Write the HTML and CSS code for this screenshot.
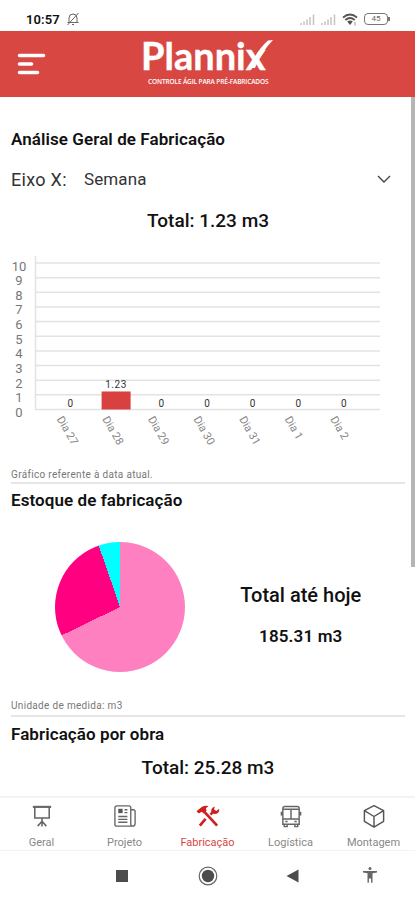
FILE: index.html
```html
<!DOCTYPE html>
<html lang="pt-BR">
<head>
<meta charset="UTF-8">
<meta name="viewport" content="width=device-width, initial-scale=1.0">
<title>Plannix</title>
<link rel="stylesheet" href="styles.css">
</head>
<body>
  <div class="status-bar">
    <span class="time">10:57</span>
    <svg class="mute" width="14" height="14" viewBox="0 0 14 14" fill="none" stroke="#666" stroke-width="1">
      <path d="M3 10.5V6a4 4 0 0 1 8 0v4.500zM1.500 10.500h11M6 12.500h2M12.500 1L1.500 13"/>
    </svg>
    <div class="status-icons">
      <svg width="15" height="12" viewBox="0 0 15 12" stroke="#c4c4c4" stroke-width="1.500">
        <path d="M1 12v-2M4 12V8.500M7 12V6.500M10 12V4M13.500 12V1.500"/>
      </svg>
      <svg width="15" height="12" viewBox="0 0 15 12" stroke="#c4c4c4" stroke-width="1.500">
        <path d="M1 12v-2M4 12V8.500M7 12V6.500M10 12V4M13.500 12V1.500"/>
      </svg>
      <svg class="wifi" width="16" height="13" viewBox="0 0 16 13" fill="none" stroke="#555" stroke-width="1.700">
        <path d="M1 4.500Q8-1.500 15 4.500M3.300 7Q8 3 12.700 7"/>
        <path d="M5.200 8.500Q8 6.500 10.800 8.500L8 12z" fill="#555" stroke="none"/>
        <path d="M13 9v3.500" stroke="#aaa" stroke-width="1.200"/>
      </svg>
      <span class="battery">45</span>
    </div>
  </div>

  <header class="header">
    <svg class="menu" width="29" height="22" viewBox="0 0 29 22" stroke="#fff" stroke-width="3.600" stroke-linecap="round">
      <path d="M2.500 2.500h24M2.500 11h12M2.500 19.500h18"/>
    </svg>
    <div class="logo">
      <div class="logo-name">Plannix
        <svg class="swoosh" width="26" height="31" viewBox="0 0 26 31" fill="#fff">
          <path d="M2 29Q10 11 21 1.500L26 1Q15 12 8 29z"/>
        </svg>
      </div>
      <div class="logo-sub">CONTROLE ÁGIL PARA PRÉ-FABRICADOS</div>
    </div>
  </header>

  <main class="content">
    <section class="section analysis">
      <h2>Análise Geral de Fabricação</h2>
      <div class="axis-select">
        <span class="axis-label">Eixo X:</span>
        <span class="axis-value">Semana</span>
        <svg width="14" height="9" viewBox="0 0 14 9" fill="none" stroke="#444" stroke-width="1.400">
          <path d="M1 1l6 6 6-6"/>
        </svg>
      </div>
      <p class="total total-week">Total: 1.23 m3</p>
      <svg class="bar-chart" width="394" height="206" viewBox="0 0 394 206">
        <g class="grid" id="grid"></g>
        <path class="axis" d="M24.500 5v154"/>
        <g id="bars"></g>
      </svg>
      <p class="note">Gráfico referente à data atual.</p>
    </section>

    <section class="section stock">
      <h2>Estoque de fabricação</h2>
      <div class="stock-row">
        <div class="pie"></div>
        <div class="stock-total">
          <p class="stock-title">Total até hoje</p>
          <p class="stock-value">185.31 m3</p>
        </div>
      </div>
      <p class="note">Unidade de medida: m3</p>
    </section>

    <section class="by-work">
      <h2>Fabricação por obra</h2>
      <p class="total total-work">Total: 25.28 m3</p>
    </section>
    <div class="scrollbar"></div>
  </main>

  <nav class="tabs">
    <a class="tab">
      <svg width="24" height="26" viewBox="0 0 24 26" fill="none" stroke="#666" stroke-width="1.600">
        <path d="M2.500 3h19" stroke-width="2.200"/>
        <path d="M4.500 3v11.500h15V3M12 14.500v9M12 18l-4.500 5M12 18l4.500 5"/>
      </svg>
      <span>Geral</span>
    </a>
    <a class="tab">
      <svg width="24" height="26" viewBox="0 0 24 26" fill="none" stroke="#666" stroke-width="1.400">
        <path d="M18 21V4a2 2 0 0 0-2-2H3.500a2 2 0 0 0-2 2v17a2 2 0 0 0 2 2H20a2.500 2.500 0 0 0 2.500-2.500V8a2 2 0 0 0-2-2H18M18 20a2.500 2.500 0 0 0 2 3"/>
        <path d="M11.500 6h3M11.500 9h3M5 13h9.500M5 16h9.500M5 19h9.500"/>
        <path d="M5 5h4.500v4.500H5z" fill="#555" stroke="none"/>
      </svg>
      <span>Projeto</span>
    </a>
    <a class="tab active">
      <svg width="26" height="26" viewBox="0 0 26 26" fill="none" stroke="#cf1f1f" stroke-width="2.800">
        <path d="M9.500 8.500L22.500 22.500M10.500 15.500L4.500 22.500"/>
        <path d="M15.500 11l3-3" stroke-width="2.500"/>
        <path d="M1 7.500L6.500 3Q9.500 1.200 13.500 2L10.800 4.500L11.500 7L8.500 10L6.500 8L3.500 10z" fill="#cf1f1f" stroke="none"/>
        <path d="M16.500 9Q15.500 4 20 2.500L19.300 5.500L21.500 7.300L24.800 5Q25 10.500 19.500 10.500z" fill="#cf1f1f" stroke="none"/>
      </svg>
      <span>Fabricação</span>
    </a>
    <a class="tab">
      <svg width="24" height="26" viewBox="0 0 24 26" fill="none" stroke="#666" stroke-width="1.500">
        <path d="M3.500 21V4.500a2 2 0 0 1 2-2h13a2 2 0 0 1 2 2V21zM3.500 5.500h17M3.500 15.500h17M12 5.500v10M5 21v2.500h3V21M16 21v2.500h3V21M2 8v4M22 8v4M6 18.200h2.500M15.500 18.200H18"/>
      </svg>
      <span>Logística</span>
    </a>
    <a class="tab">
      <svg width="24" height="26" viewBox="0 0 24 26" fill="none" stroke="#555" stroke-width="1.500" stroke-linejoin="round">
        <path d="M12 1.800l10 5.200v11L12 24L2 18V7zM2 7l10 6 10-6M12 13v11"/>
      </svg>
      <span>Montagem</span>
    </a>
  </nav>

  <div class="system-nav">
    <span></span>
    <svg width="24" height="24" viewBox="0 0 24 24"><path d="M6 6h12v12H6z" fill="#4c4c4c"/></svg>
    <svg width="24" height="24" viewBox="0 0 24 24">
      <circle cx="12" cy="12" r="8.800" fill="none" stroke="#666" stroke-width="1.200"/>
      <circle cx="12" cy="12" r="6.200" fill="#4c4c4c"/>
    </svg>
    <svg width="24" height="24" viewBox="0 0 24 24"><path d="M17.500 5.500v13L5.500 12z" fill="#4c4c4c"/></svg>
    <svg width="24" height="24" viewBox="0 0 24 24" fill="#666">
      <circle cx="12" cy="4.500" r="1.500"/>
      <path d="M5 7h14v1.500l-4.500.8v9.500h-1.400V14.500h-2.200v4.300H9.500V9.300L5 8.500z"/>
    </svg>
  </div>

  <script>
    const days = [
      ["Dia 27", 0], ["Dia 28", 1.23], ["Dia 29", 0], ["Dia 30", 0],
      ["Dia 31", 0], ["Dia 1", 0], ["Dia 2", 0]
    ];
    const base = 158.5;
    const step = 14.65;

    let grid = "";
    for (let i = 0; i <= 10; i++) {
      const y = base - i * step;
      grid += `<path d="M24 ${y}H369"/><text x="8" y="${y + 7.5}">${i}</text>`;
    }
    document.getElementById("grid").innerHTML = grid;

    let bars = "";
    days.forEach(([name, value], i) => {
      const x = 59.5 + i * 45.6;
      const h = value * step;
      if (value > 0) {
        bars += `<rect x="${x - 14.5}" y="${base - h}" width="29" height="${h}"/>`;
      }
      bars += `<text class="value" x="${x}" y="${base - h - 3}">${value}</text>`;
      bars += `<text class="day" transform="translate(${x - 14} 168) rotate(60)">${name}</text>`;
    });
    document.getElementById("bars").innerHTML = bars;
  </script>
</body>
</html>
```
FILE: styles.css
```css
* {
  box-sizing: border-box;
}

body {
  display: flex;
  flex-direction: column;
  height: 900px;
  margin: 0;
  overflow: hidden;
  font-family: Roboto, sans-serif;
  background-color: #fff;
  color: #111;
}

h2,
p {
  margin: 0;
}

svg {
  display: block;
}

.status-bar {
  display: flex;
  align-items: center;
  height: 31px;
  padding: 7px 27px 0 26px;
}

.time {
  font-size: 13px;
  font-weight: 600;
  letter-spacing: 0.1px;
}

.mute {
  margin-left: 6px;
}

.status-icons {
  display: flex;
  align-items: center;
  gap: 6px;
  margin-left: auto;
}

.battery {
  position: relative;
  width: 24px;
  height: 12px;
  border: 1.5px solid #777;
  border-radius: 4px;
  font-size: 8px;
  line-height: 10px;
  text-align: center;
  color: #666;
}

.battery::after {
  content: "";
  position: absolute;
  right: -3px;
  top: 3px;
  width: 2px;
  height: 4px;
  background-color: #777;
}

.header {
  display: flex;
  height: 66px;
  background-color: #d94743;
  color: #fff;
}

.menu {
  margin: 22px 0 0 17px;
}

.logo {
  margin-left: 95px;
  padding-top: 4px;
}

.logo-name {
  position: relative;
  height: 40px;
  font-family: Lato, sans-serif;
  font-size: 38px;
  font-weight: 700;
  line-height: 40px;
  -webkit-text-stroke: 0.4px #fff;
}

.swoosh {
  position: absolute;
  left: 106px;
  top: 4px;
}

.logo-sub {
  margin: 2px 0 0 7px;
  font-family: "Open Sans", sans-serif;
  font-size: 6.5px;
  font-weight: 600;
  line-height: 9px;
  letter-spacing: -0.13px;
  white-space: nowrap;
}

.content {
  position: relative;
  height: 701px;
  padding: 0 10px 0 11px;
  border-bottom: 2px solid #f3f3f3;
  overflow: hidden;
}

.scrollbar {
  position: absolute;
  right: 0;
  top: 0;
  width: 4px;
  height: 470px;
  background-color: #b5b5b5;
}

.section {
  border-bottom: 2px solid #e6e6e6;
}

h2 {
  font-size: 17px;
  font-weight: 600;
  line-height: 20px;
  letter-spacing: 0.08px;
}

.analysis {
  height: 387px;
  padding-top: 32px;
}

.axis-select {
  display: flex;
  align-items: center;
  height: 24px;
  margin-top: 18px;
  padding-right: 14px;
  color: #333;
}

.axis-select svg {
  margin-left: auto;
}

.axis-label {
  width: 73px;
  font-size: 18px;
  letter-spacing: 0.3px;
}

.axis-value {
  font-size: 17px;
  letter-spacing: 0.1px;
}

.total {
  font-size: 19px;
  font-weight: 500;
  line-height: 24px;
  text-align: center;
}

.total-week {
  margin-top: 18px;
}

.bar-chart {
  margin-top: 18px;
}

.grid path,
.axis {
  stroke: #e3e3e3;
  stroke-width: 1.5;
}

.grid text {
  font-size: 13px;
  text-anchor: middle;
  fill: #777;
}

#bars rect {
  fill: #d94040;
}

.value {
  font-size: 10px;
  letter-spacing: 0.6px;
  text-anchor: middle;
  fill: #333;
}

.day {
  font-size: 11px;
  fill: #888;
}

.note {
  font-size: 10px;
  line-height: 14px;
  letter-spacing: 0.32px;
  color: #777;
}

.bar-chart + .note {
  margin-top: 11px;
}

.stock {
  height: 233px;
  padding-top: 6px;
}

.stock-row {
  display: flex;
  height: 130px;
  margin: 32px 0 27px 43.5px;
}

.pie {
  width: 130px;
  height: 130px;
  border-radius: 50%;
  background: conic-gradient(#ff80c0 0 67.8%, #ff0080 67.8% 94.700%, #00ffff 94.700%);
}

.stock-total {
  flex: 1;
  padding: 41px 0 0 12px;
  text-align: center;
}

.stock-title {
  font-size: 20px;
  font-weight: 500;
  line-height: 24px;
}

.stock-value {
  margin-top: 19px;
  font-size: 17px;
  font-weight: 600;
  line-height: 20px;
  letter-spacing: 0.15px;
}

.by-work {
  padding-top: 7px;
}

.total-work {
  margin-top: 12px;
}

.tabs {
  display: flex;
  height: 53px;
  border-bottom: 1px solid #f3f3f3;
}

.tab {
  display: flex;
  flex: 1;
  flex-direction: column;
  align-items: center;
  padding-top: 6px;
  font-size: 11px;
  line-height: 14px;
  color: #888;
}

.tab span {
  margin-top: 7px;
}

.tab.active {
  color: #d94743;
}

.system-nav {
  display: grid;
  grid-template-columns: 80px 83px 89px 81px 73px;
  justify-items: center;
  padding-top: 13px;
}
```
